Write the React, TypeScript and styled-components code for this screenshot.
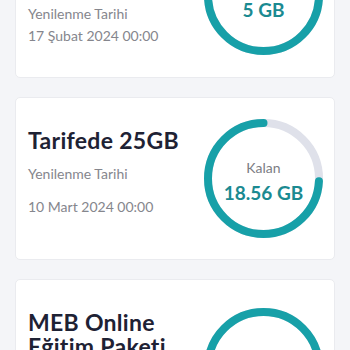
import React from "react";
import styled, { createGlobalStyle } from "styled-components";

const GlobalStyle = createGlobalStyle`
    html, body {
        margin: 0;
        padding: 0;
        background: #f4f5f8;
        font-family: Lato, "Noto Sans", sans-serif;
    }
`;

const Viewport = styled.div`
    width: 350px;
    height: 350px;
    overflow: hidden;
    background: #f4f5f8;
`;

// the list is shown scrolled down, so it starts above the window
const PackageList = styled.div`
    display: flex;
    flex-direction: column;
    gap: 19px;
    padding: 0 15px;
    margin-top: -87px;
`;

const Card = styled.div`
    display: flex;
    align-items: flex-start;
    background: #ffffff;
    border: 1px solid #eaebef;
    border-radius: 5px;
    padding: 21px 11px 21px 12px;
`;

const InfoColumn = styled.div`
    flex: 1;
    display: flex;
    flex-direction: column;
    padding: 9px 0 10px;
`;

const Title = styled.h2`
    margin: 0 0 12px;
    font-size: 23px;
    line-height: 24px;
    font-weight: 700;
    letter-spacing: 0.3px;
    color: #1e2234;
    max-width: 160px;
`;

const Label = styled.div<{ $gap: number }>`
    font-size: 14px;
    line-height: 20px;
    color: #85868d;
    margin-bottom: ${(p) => p.$gap}px;
`;

const DateText = styled.div`
    font-size: 14px;
    line-height: 20px;
    color: #85868d;
`;

const RingBox = styled.div`
    position: relative;
    width: 119px;
    height: 119px;
    align-self: center;
    flex-shrink: 0;
`;

const RingCenter = styled.div`
    position: absolute;
    inset: 0;
    display: flex;
    flex-direction: column;
    align-items: center;
    justify-content: center;
    padding-top: 5px;
    box-sizing: border-box;
`;

const RingLabel = styled.div`
    font-size: 14px;
    line-height: 20px;
    color: #7c7d84;
    margin-bottom: 3px;
`;

const RingValue = styled.div`
    font-size: 19px;
    line-height: 24px;
    font-weight: 700;
    color: #1b8a91;
`;

type UsageRingProps = { remaining: number; total: number; value: string };

function UsageRing({ remaining, total, value }: UsageRingProps) {
    const r = 55.5;
    const c = 2 * Math.PI * r;
    const ratio = Math.min(remaining / total, 1);
    return (
        <RingBox>
            <svg width="119" height="119" viewBox="0 0 119 119">
                <circle cx="59.5" cy="59.5" r={r} fill="none" stroke="#dfe1ea" strokeWidth="8" />
                <circle
                    cx="59.5"
                    cy="59.5"
                    r={r}
                    fill="none"
                    stroke="#17a0a8"
                    strokeWidth="8"
                    strokeLinecap={ratio >= 1 ? "butt" : "round"}
                    strokeDasharray={`${ratio * c} ${c}`}
                    strokeDashoffset={-(1 - ratio) * c}
                    transform="rotate(-90 59.5 59.5)"
                />
            </svg>
            <RingCenter>
                <RingLabel>Kalan</RingLabel>
                <RingValue>{value}</RingValue>
            </RingCenter>
        </RingBox>
    );
}

const packages = [
    { title: "Hoş Geldin Paketi", date: "17 Şubat 2024 00:00", gap: 2, remaining: 5, total: 5, value: "5 GB" },
    { title: "Tarifede 25GB", date: "10 Mart 2024 00:00", gap: 13, remaining: 18.56, total: 25, value: "18.56 GB" },
    { title: "MEB Online Eğitim Paketi", date: "10 Mart 2024 00:00", gap: 13, remaining: 3, total: 3, value: "3 GB" },
];

export default function App() {
    return (
        <Viewport>
            <GlobalStyle />
            <PackageList>
                {packages.map((p) => (
                    <Card key={p.title}>
                        <InfoColumn>
                            <Title>{p.title}</Title>
                            <Label $gap={p.gap}>Yenilenme Tarihi</Label>
                            <DateText>{p.date}</DateText>
                        </InfoColumn>
                        <UsageRing remaining={p.remaining} total={p.total} value={p.value} />
                    </Card>
                ))}
            </PackageList>
        </Viewport>
    );
}
